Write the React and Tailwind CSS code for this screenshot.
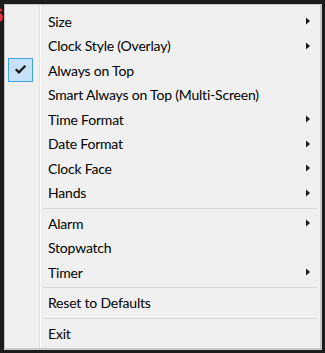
import React from "react";

const items = [
  { label: "Size", sub: true },
  { label: "Clock Style (Overlay)", sub: true },
  { label: "Always on Top", checked: true },
  { label: "Smart Always on Top (Multi-Screen)" },
  { label: "Time Format", sub: true },
  { label: "Date Format", sub: true },
  { label: "Clock Face", sub: true },
  { label: "Hands", sub: true },
  { sep: true },
  { label: "Alarm", sub: true },
  { label: "Stopwatch" },
  { label: "Timer", sub: true },
  { sep: true },
  { label: "Reset to Defaults" },
  { sep: true },
  { label: "Exit" },
];

function Arrow() {
  return (
    <svg width="4" height="8" viewBox="0 0 4 8" className="block">
      <path d="M0 0.5 L4 4 L0 7.5 Z" fill="#1a1a1a" />
    </svg>
  );
}

function Check() {
  return (
    <svg width="25" height="24" viewBox="0 0 25 24" className="block">
      <path
        d="M7.4 11.2 L10.8 14.6 L17.8 7.4"
        fill="none"
        stroke="#1a1a1a"
        strokeWidth="2.5"
        strokeLinecap="butt"
        strokeLinejoin="miter"
      />
    </svg>
  );
}

export default function App() {
  return (
    <div className="relative w-[325px] h-[353px] bg-[#1c1c1c] overflow-hidden">
      <span className="absolute left-[-8px] top-[5px] text-[20px] leading-none font-bold text-[#e8345c] [font-family:'Liberation_Sans',sans-serif]">
        6
      </span>
      <div className="relative ml-[4px] mt-[4px] w-[318px] h-[346px] border border-[#c3c3c3] border-r-2 border-b-2 border-r-[#c9c9c9] border-b-[#c9c9c9] bg-[#f0f0f0] bg-[linear-gradient(to_right,#f0f0f0_34px,#e1e1e1_34px,#e1e1e1_35px,#fbfbfb_35px,#fbfbfb_36px,#f0f0f0_36px)] pt-[3.75px] pb-[3.75px] text-[14px] tracking-[-0.2px] text-black [font-family:'Lato','Noto_Sans',sans-serif]">
        {items.map((it, i) =>
          it.sep ? (
            <div key={i} className="h-[6px] pt-[2.75px] pl-[37px] pr-[3px]">
              <div className="h-px bg-[#d7d7d7]" />
            </div>
          ) : (
            <div key={i} className="flex items-center h-[24.5px]">
              <div className="w-[43px] shrink-0 h-full pl-[3px] flex items-center">
                {it.checked ? (
                  <div className="w-[25px] h-[24px] bg-[#c6e1f5] border border-[#3ea2e6] flex items-center justify-center">
                    <Check />
                  </div>
                ) : null}
              </div>
              <div className="flex-1 pt-[1px] leading-[23.5px] whitespace-nowrap">{it.label}</div>
              <div className="w-[15px] shrink-0 pr-[10px] flex items-center justify-end">
                {it.sub ? <Arrow /> : null}
              </div>
            </div>
          )
        )}
      </div>
    </div>
  );
}
